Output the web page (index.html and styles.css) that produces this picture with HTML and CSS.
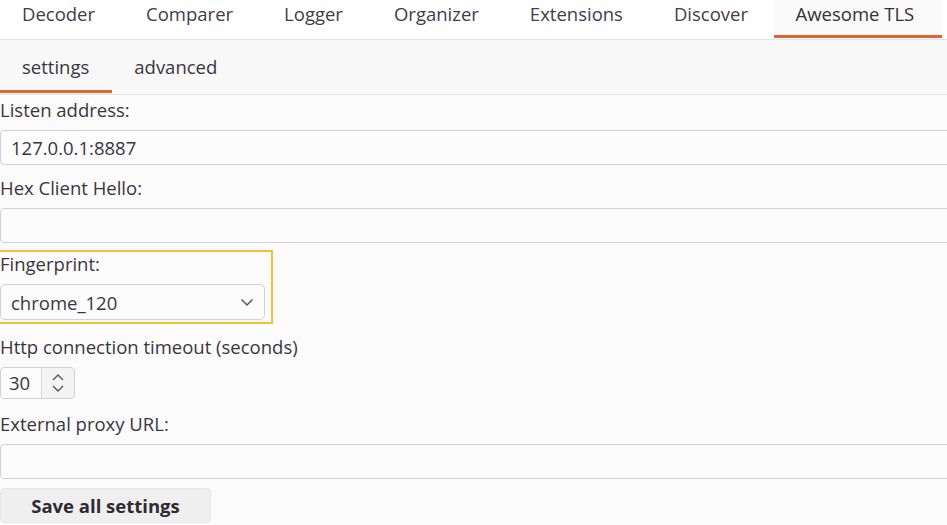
FILE: index.html
```html
<!DOCTYPE html>
<html lang="en">
<head>
  <meta charset="UTF-8">
  <title>Awesome TLS</title>
  <link rel="stylesheet" href="styles.css">
</head>
<body>

<div class="tabs">
  <div class="tab">Decoder</div>
  <div class="tab">Comparer</div>
  <div class="tab">Logger</div>
  <div class="tab">Organizer</div>
  <div class="tab">Extensions</div>
  <div class="tab">Discover</div>
  <div class="tab active">Awesome TLS</div>
</div>

<div class="subtabs">
  <div class="subtab active">settings</div>
  <div class="subtab">advanced</div>
</div>

<div class="form">
  <div class="field first">
    <label>Listen address:</label>
    <input class="text" value="127.0.0.1:8887">
  </div>

  <div class="field">
    <label>Hex Client Hello:</label>
    <input class="text" value="">
  </div>

  <div class="focusbox">
    <label>Fingerprint:</label>
    <div class="select">
      <span>chrome_120</span>
      <svg width="14" height="9" viewBox="0 0 14 9"><path d="M1.5 1.5 L7 7 L12.5 1.5" fill="none" stroke="#555" stroke-width="1.5"/></svg>
    </div>
  </div>

  <div class="field">
    <label>Http connection timeout (seconds)</label>
    <div class="spinner">
      <span class="num">30</span>
      <span class="arrows">
        <svg width="14" height="22" viewBox="0 0 14 22"><path d="M2 8 L7 3 L12 8 M2 14 L7 19 L12 14" fill="none" stroke="#555" stroke-width="1.4"/></svg>
      </span>
    </div>
  </div>

  <div class="field gap">
    <label>External proxy URL:</label>
    <input class="text" value="">
  </div>

  <button class="save">Save all settings</button>
</div>

</body>
</html>
```

FILE: styles.css
```css
body { margin: 0; background: #fbfbfb; color: #3b3540; font-family: "Open Sans", sans-serif; font-size: 18.5px; overflow: hidden; }

.tabs { display: flex; background: #fff; height: 39px; border-bottom: 1px solid #e4e4e4; white-space: nowrap; }
.tab { padding: 0 25.5px; line-height: 27px; height: 38px; box-sizing: border-box; border-bottom: 3px solid transparent; color: #443c48; }
.tab:first-child { padding-left: 22px; }
.tab.active { background: #fafafa; border-bottom-color: #e2652f; color: #333; padding: 0 28px 0 22px; }

.subtabs { display: flex; background: #f8f8f8; height: 55px; border-bottom: 1px solid #e4e4e4; box-sizing: border-box; }
.subtab { padding: 0 23px 0 22px; line-height: 54px; height: 53px; box-sizing: border-box; border-bottom: 3px solid transparent; }
.subtab.active { border-bottom-color: #e2652f; }

.form { padding-top: 3px; }
.field { margin-top: 11px; }
.field.first { margin-top: 0; }
.field.gap { margin-top: 13px; }
label { display: block; line-height: 24px; margin-bottom: 8px; }

.text { display: block; box-sizing: border-box; width: calc(100% + 20px); height: 35px; border: 1px solid #d2d2d2; border-radius: 4px; background: #fcfcfc; font: inherit; color: #3b3540; padding: 0 10px; outline: none; }

.focusbox { margin: 7px 0 0 -10px; width: 283px; box-sizing: border-box; border: 2px solid #f2c232; padding: 0 6px 0 8px; }
.focusbox .select { margin-bottom: 2px; }
.select { display: flex; align-items: center; justify-content: space-between; box-sizing: border-box; width: 265px; height: 36px; border: 1px solid #d2d2d2; border-radius: 5px; background: #fcfcfc; padding: 0 10px; }

.spinner { display: flex; width: 75px; height: 32px; box-sizing: border-box; border: 1px solid #d2d2d2; border-radius: 4px; background: #fcfcfc; }
.spinner .num { width: 41px; padding-left: 8px; box-sizing: border-box; line-height: 30px; border-right: 1px solid #d8d8d8; }
.spinner .arrows { flex: 1; display: flex; align-items: center; justify-content: center; background: #f4f4f4; border-radius: 0 4px 4px 0; }

.save { display: block; margin-top: 9px; width: 211px; height: 35px; border: 1px solid #e6e6e6; border-radius: 4px; background: #efefef; font: inherit; font-weight: bold; color: #2f2a33; }
```
